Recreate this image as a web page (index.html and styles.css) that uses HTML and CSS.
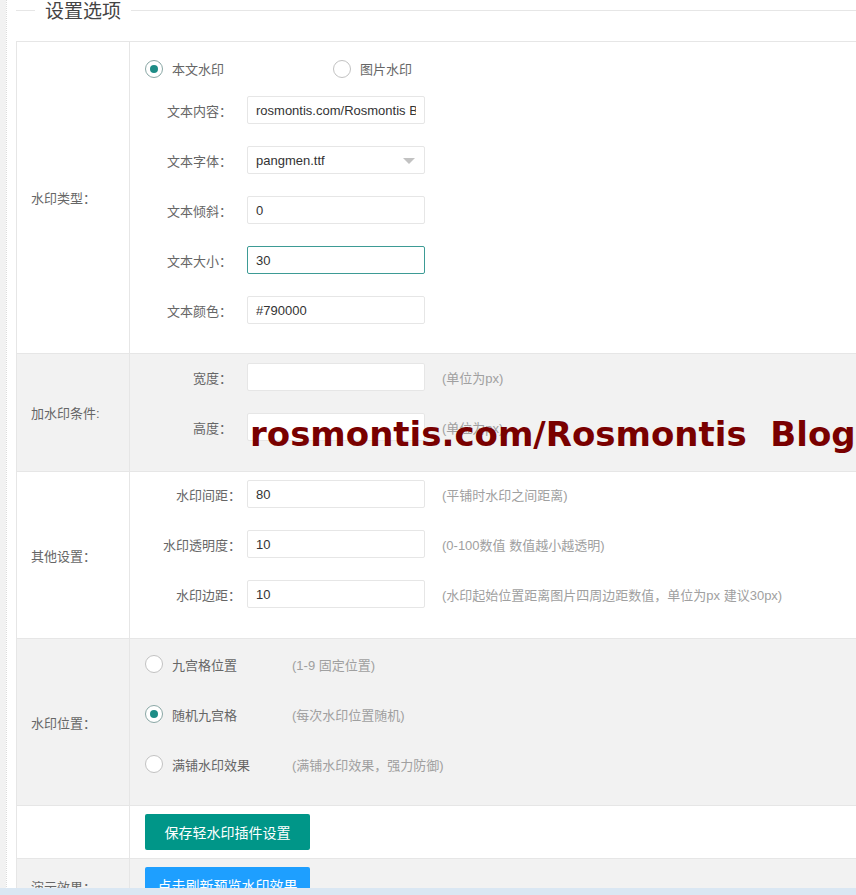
FILE: index.html
```html
<!DOCTYPE html>
<html lang="zh-CN">
<head>
    <meta charset="UTF-8">
    <title>轻水印插件设置</title>
    <link rel="stylesheet" href="styles.css">
</head>
<body>
    <div class="page">
        <div class="legend"><span>设置选项</span></div>

        <table class="settings">
            <colgroup>
                <col class="col-name">
                <col>
            </colgroup>
            <tr>
                <td class="name">水印类型：</td>
                <td class="body first">
                    <div class="radio-line">
                        <label class="radio checked wide"><i></i>本文水印</label>
                        <label class="radio"><i></i>图片水印</label>
                    </div>
                    <div class="item">
                        <span class="label">文本内容：</span>
                        <input class="input" type="text" value="rosmontis.com/Rosmontis Blog">
                    </div>
                    <div class="item">
                        <span class="label">文本字体：</span>
                        <div class="input select">pangmen.ttf</div>
                    </div>
                    <div class="item">
                        <span class="label">文本倾斜：</span>
                        <input class="input" type="text" value="0">
                    </div>
                    <div class="item">
                        <span class="label">文本大小：</span>
                        <input class="input focus" type="text" value="30">
                    </div>
                    <div class="item">
                        <span class="label">文本颜色：</span>
                        <input class="input" type="text" value="#790000">
                    </div>
                </td>
            </tr>
            <tr class="grey">
                <td class="name">加水印条件:</td>
                <td class="body">
                    <div class="item">
                        <span class="label">宽度：</span>
                        <input class="input" type="text" value="">
                        <span class="tip">(单位为px)</span>
                    </div>
                    <div class="item">
                        <span class="label">高度：</span>
                        <input class="input" type="text" value="">
                        <span class="tip">(单位为px)</span>
                    </div>
                </td>
            </tr>
            <tr>
                <td class="name">其他设置：</td>
                <td class="body other">
                    <div class="item">
                        <span class="label">水印间距：</span>
                        <input class="input" type="text" value="80">
                        <span class="tip">(平铺时水印之间距离)</span>
                    </div>
                    <div class="item">
                        <span class="label">水印透明度：</span>
                        <input class="input" type="text" value="10">
                        <span class="tip">(0-100数值 数值越小越透明)</span>
                    </div>
                    <div class="item">
                        <span class="label">水印边距：</span>
                        <input class="input" type="text" value="10">
                        <span class="tip">(水印起始位置距离图片四周边距数值，单位为px 建议30px)</span>
                    </div>
                </td>
            </tr>
            <tr class="grey">
                <td class="name">水印位置：</td>
                <td class="body positions">
                    <div class="pos-item">
                        <label class="radio"><i></i>九宫格位置</label>
                        <span class="tip">(1-9 固定位置)</span>
                    </div>
                    <div class="pos-item">
                        <label class="radio checked"><i></i>随机九宫格</label>
                        <span class="tip">(每次水印位置随机)</span>
                    </div>
                    <div class="pos-item">
                        <label class="radio"><i></i>满铺水印效果</label>
                        <span class="tip">(满铺水印效果，强力防御)</span>
                    </div>
                </td>
            </tr>
            <tr>
                <td class="name"></td>
                <td class="body buttons">
                    <button class="btn">保存轻水印插件设置</button>
                </td>
            </tr>
            <tr class="grey">
                <td class="name">演示效果：</td>
                <td class="body buttons last">
                    <button class="btn btn-blue">点击刷新预览水印效果</button>
                </td>
            </tr>
        </table>

        <!-- preview watermark drawn over the form -->
        <div class="watermark">rosmontis.com/Rosmontis&nbsp;&nbsp;Blog</div>
    </div>

    <div class="status-bar"></div>
</body>
</html>
```

FILE: styles.css
```css
* {
    margin: 0;
    padding: 0;
    box-sizing: border-box;
}

html, body {
    overflow: hidden;
}

body {
    font-family: "Liberation Sans", "Noto Sans CJK SC", sans-serif;
    font-size: 13px;
    color: #666;
    background-color: #f2f2f2;
    min-height: 100vh;
}

.page {
    position: relative;
    margin-left: 6px;
    border-left: 1px dotted #dcdcdc;
    background-color: #fff;
    min-height: 100vh;
    padding-left: 9px;
    padding-top: 1px;
}

/* fieldset style title */
.legend {
    display: flex;
    align-items: center;
    height: 18px;
    margin-bottom: 22px;
}

.legend::before,
.legend::after {
    content: "";
    height: 1px;
    background-color: #e6e6e6;
}

.legend::before {
    width: 19px;
}

.legend::after {
    flex: 1;
}

.legend span {
    padding: 0 10px;
    font-size: 19px;
    line-height: 18px;
    color: #444;
    font-family: "Noto Sans CJK SC", sans-serif;
}

.settings {
    width: 1000px;
    border-collapse: collapse;
    table-layout: fixed;
}

.col-name {
    width: 113px;
}

.settings td {
    border: 1px solid #e6e6e6;
}

.settings tr.grey {
    background-color: #f2f2f2;
}

.name {
    padding: 0 14px;
    vertical-align: middle;
    white-space: nowrap;
}

.body {
    padding: 9px 15px 30px;
    vertical-align: top;
}

.body.first {
    padding-bottom: 29px;
}

.body.other {
    padding-top: 8px;
}

.radio-line {
    display: flex;
    align-items: center;
    height: 35px;
    margin-bottom: 10px;
}

.radio {
    display: inline-flex;
    align-items: center;
    color: #666;
}

.radio.wide {
    width: 188px;
}

.radio i {
    position: relative;
    width: 18px;
    height: 18px;
    border: 1px solid #c2c2c2;
    border-radius: 50%;
    margin-right: 9px;
    background-color: #fff;
}

.radio.checked i {
    border-color: #8aa7a5;
}

.radio.checked i::after {
    content: "";
    position: absolute;
    left: 4px;
    top: 4px;
    width: 8px;
    height: 8px;
    border-radius: 50%;
    background-color: #1d8c86;
}

.item {
    display: flex;
    align-items: center;
    height: 28px;
}

.item + .item {
    margin-top: 22px;
}

.label {
    width: 87px;
    text-align: right;
    margin-right: 15px;
    white-space: nowrap;
}

.other .label {
    width: 96px;
    margin-right: 6px;
}

.input {
    width: 178px;
    height: 28px;
    border: 1px solid #e6e6e6;
    border-radius: 2px;
    background-color: #fff;
    padding: 0 8px;
    font-family: "Liberation Sans", "Noto Sans CJK SC", sans-serif;
    font-size: 13px;
    color: #333;
    outline: none;
}

.input.focus {
    border-color: #3d9b95;
}

.select {
    position: relative;
    display: flex;
    align-items: center;
}

.select::after {
    content: "";
    position: absolute;
    right: 9px;
    top: 11px;
    border-style: solid;
    border-width: 6px 6px 0;
    border-color: #c2c2c2 transparent transparent;
}

.tip {
    margin-left: 17px;
    color: #a0a0a0;
    white-space: nowrap;
}

.positions {
    padding: 10px 15px 26px;
}

.pos-item {
    display: flex;
    align-items: center;
    height: 30px;
}

.pos-item + .pos-item {
    margin-top: 20px;
}

.pos-item .radio {
    width: 147px;
}

.pos-item .tip {
    margin-left: 0;
}

.buttons {
    padding: 8px 15px;
}

.buttons.last {
    padding-bottom: 11px;
}

.btn {
    display: block;
    width: 165px;
    height: 36px;
    border: none;
    border-radius: 2px;
    background-color: #009688;
    color: #fff;
    font-family: "Noto Sans CJK SC", sans-serif;
    font-size: 14px;
    cursor: pointer;
}

.btn-blue {
    background-color: #1e9fff;
}

.watermark {
    position: absolute;
    left: 243px;
    top: 417px;
    font-family: "DejaVu Sans", sans-serif;
    font-weight: bold;
    font-size: 34px;
    line-height: 34px;
    color: #790000;
    white-space: nowrap;
}

.status-bar {
    position: fixed;
    left: 0;
    right: 0;
    bottom: 0;
    height: 7px;
    background-color: #dae7f3;
}
```
